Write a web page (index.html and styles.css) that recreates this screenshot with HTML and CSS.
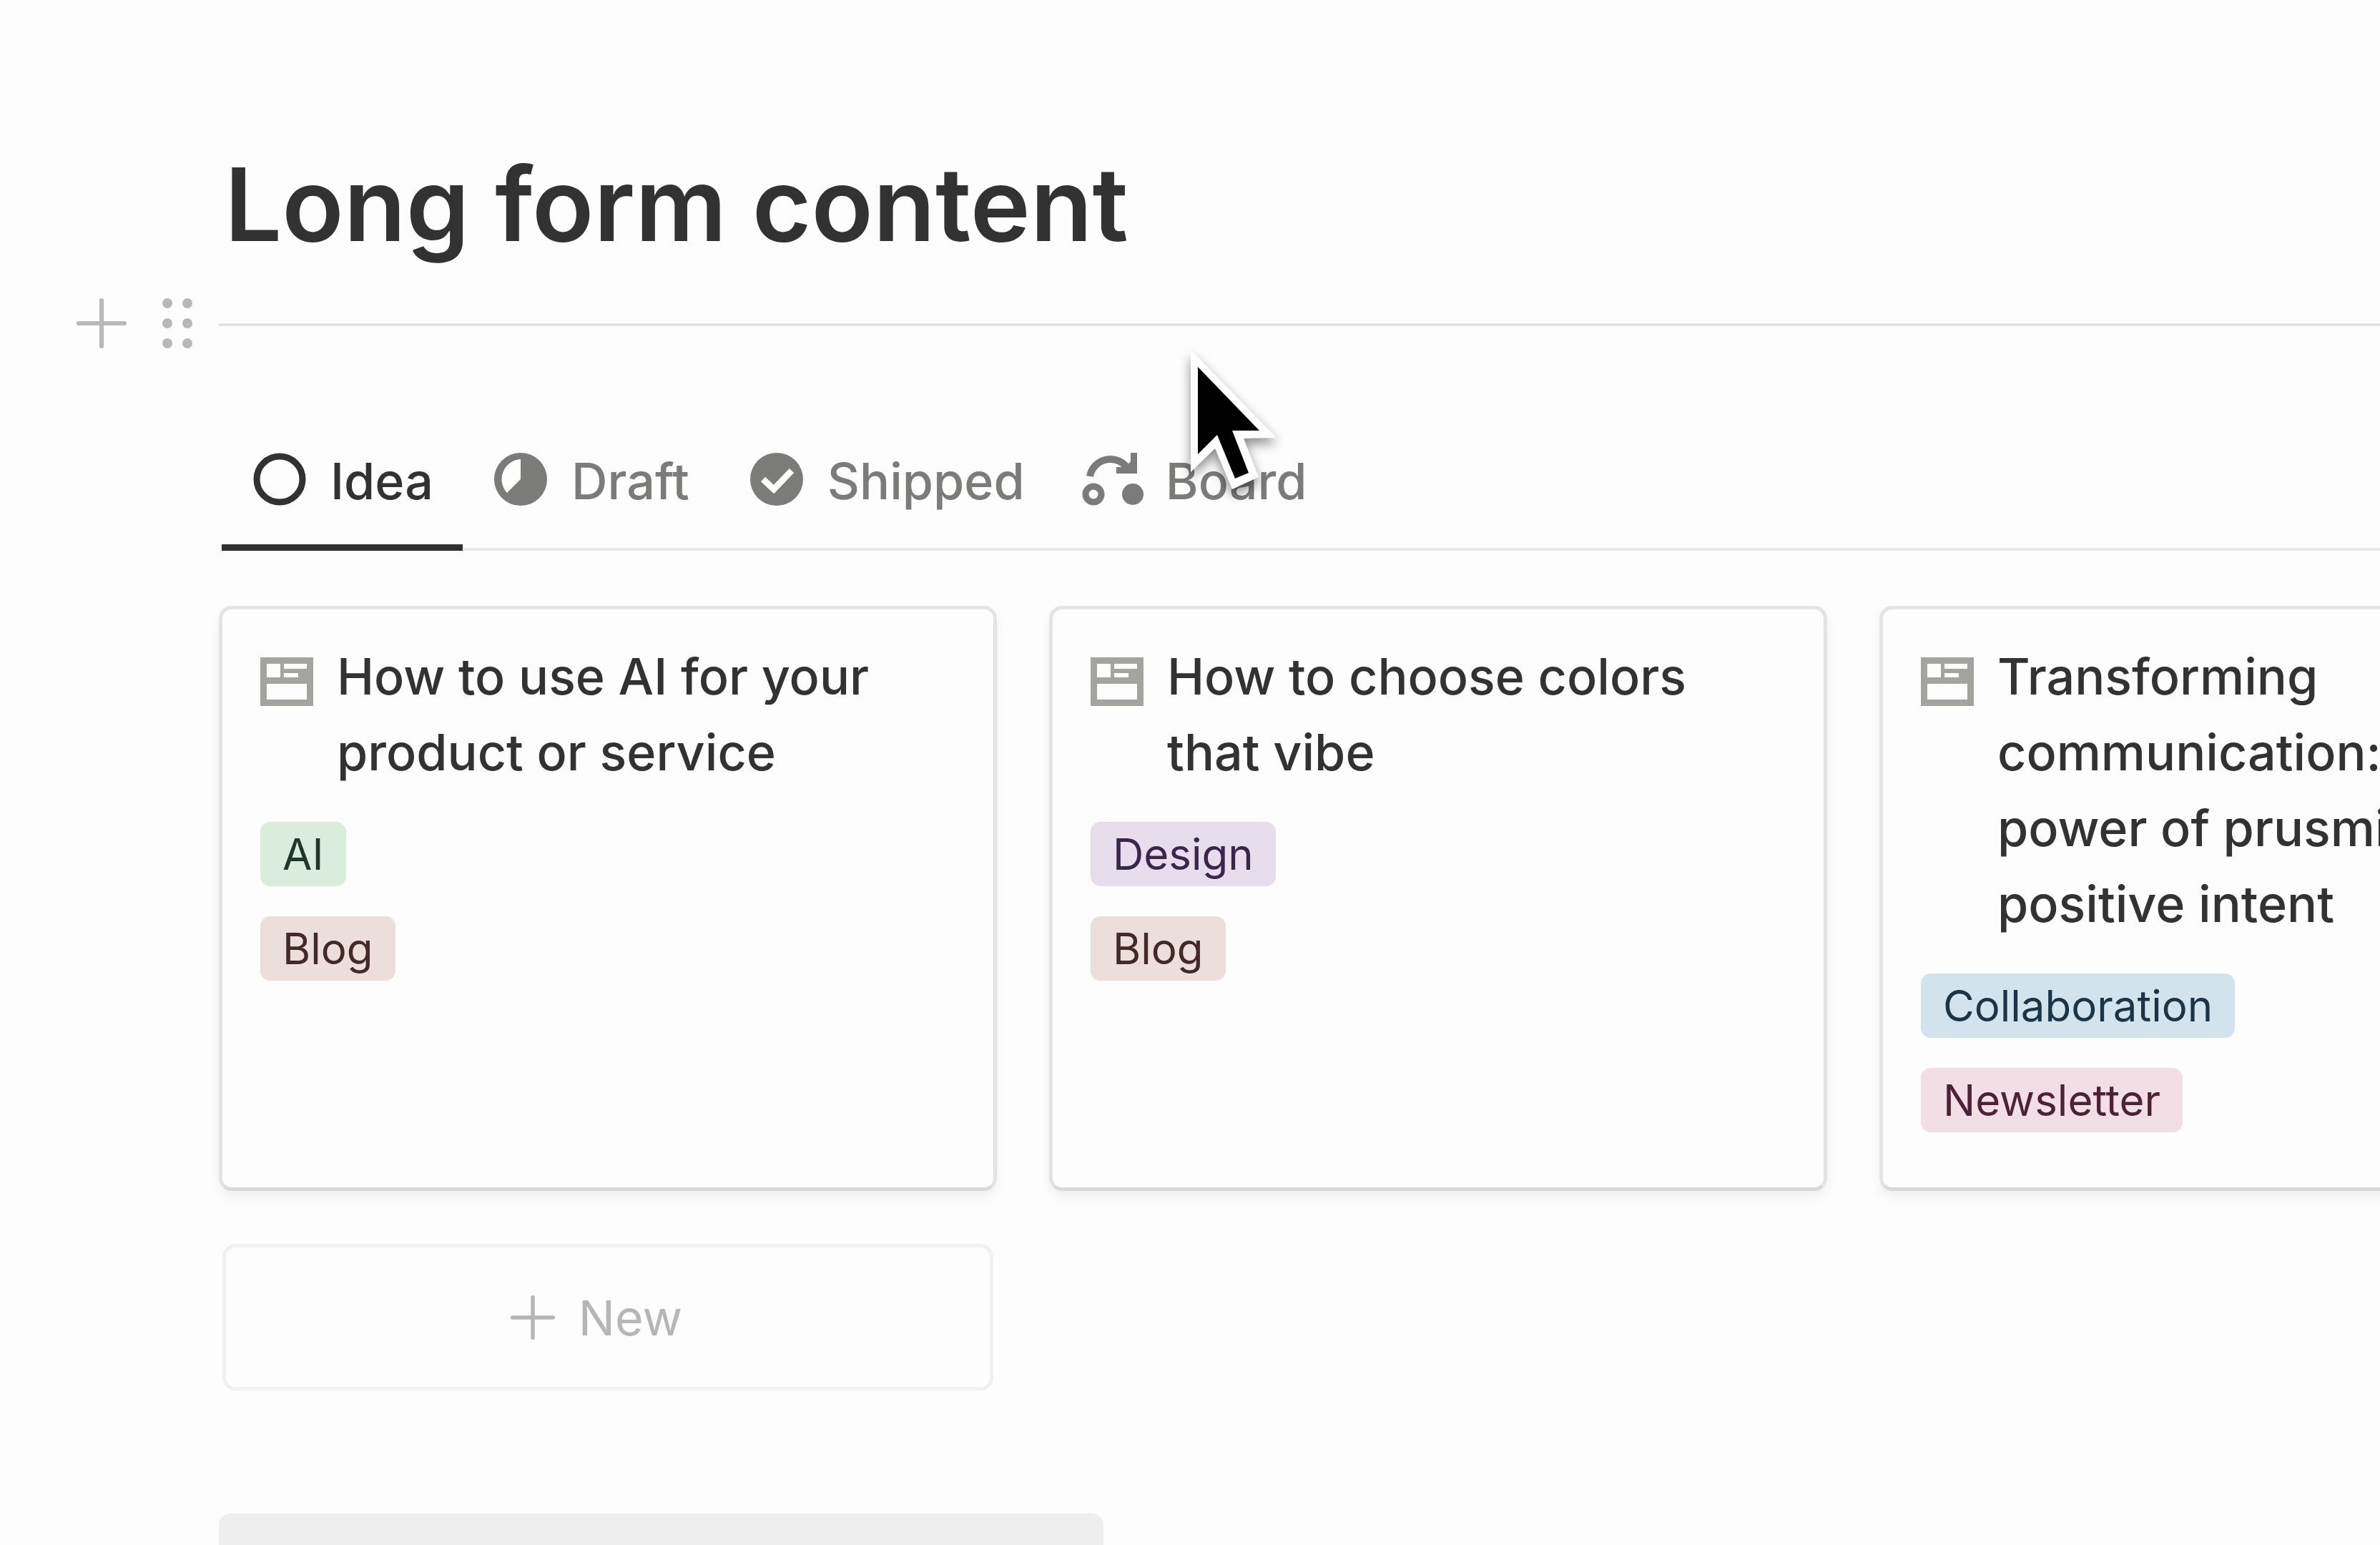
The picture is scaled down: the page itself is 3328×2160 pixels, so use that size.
FILE: index.html
```html
<!DOCTYPE html>
<html lang="en">
<head>
<meta charset="utf-8">
<title>Long form content</title>
<link rel="stylesheet" href="styles.css">
</head>
<body>
<svg class="sprite" aria-hidden="true">
  <symbol id="icon-page" viewBox="0 0 74 68">
    <path fill="#a3a3a0" fill-rule="evenodd" d="M0 0H74V68H0ZM9 9V28H28V9ZM33 9V16H65V9ZM33 22V28H53V22ZM9 37V59H65V37Z"/>
  </symbol>
  <symbol id="icon-plus" viewBox="0 0 68 68">
    <path d="M34 3V65M3 34H65" fill="none" stroke="currentColor" stroke-width="6" stroke-linecap="round"/>
  </symbol>
</svg>
<main class="page">
  <h1 class="title">Long form content</h1>

  <div class="divider-row">
    <button class="handle" type="button" aria-label="Add block"><svg class="handle-plus"><use href="#icon-plus"/></svg></button>
    <button class="handle" type="button" aria-label="Move block">
      <svg class="handle-dots" viewBox="0 0 42 70" fill="currentColor"><circle cx="7" cy="7" r="7"/><circle cx="35" cy="7" r="7"/><circle cx="7" cy="35" r="7"/><circle cx="35" cy="35" r="7"/><circle cx="7" cy="63" r="7"/><circle cx="35" cy="63" r="7"/></svg>
    </button>
    <hr class="divider">
  </div>

  <nav class="tabs" aria-label="Views">
    <button class="tab tab-active" type="button">
      <svg class="tab-icon" viewBox="0 0 74 80"><circle cx="37" cy="37" r="32" fill="none" stroke="currentColor" stroke-width="9"/></svg>
      <span>Idea</span>
    </button>
    <button class="tab" type="button">
      <svg class="tab-icon" viewBox="0 0 74 80"><path fill="currentColor" fill-rule="evenodd" d="M37 0A37 37 0 1 1 37 74A37 37 0 1 1 37 0ZM37 9A28 28 0 0 0 18 56L37 37Z"/></svg>
      <span>Draft</span>
    </button>
    <button class="tab" type="button">
      <svg class="tab-icon" viewBox="0 0 74 80"><circle cx="37" cy="37" r="37" fill="currentColor"/><path d="M18 37L33 51L58 25" fill="none" stroke="#fdfdfb" stroke-width="9"/></svg>
      <span>Shipped</span>
    </button>
    <button class="tab" type="button">
      <svg class="tab-icon tab-icon-wide" viewBox="4 0 78 80"><path d="M10 33A29 29 0 0 1 64 24" fill="none" stroke="currentColor" stroke-width="10"/><path fill="currentColor" d="M67 0H76V29H47V20H60L67 12Z"/><circle cx="15" cy="58" r="11" fill="none" stroke="currentColor" stroke-width="9"/><circle cx="70" cy="58" r="15" fill="currentColor"/></svg>
      <span>Board</span>
    </button>
  </nav>

  <section class="gallery">
    <article class="card">
      <div class="card-head"><svg class="card-icon"><use href="#icon-page"/></svg><h2 class="card-title">How to use AI for your<br>product or service</h2></div>
      <div class="tags"><span class="tag tag-green">AI</span><span class="tag tag-brown">Blog</span></div>
    </article>
    <article class="card">
      <div class="card-head"><svg class="card-icon"><use href="#icon-page"/></svg><h2 class="card-title">How to choose colors<br>that vibe</h2></div>
      <div class="tags"><span class="tag tag-purple">Design</span><span class="tag tag-brown">Blog</span></div>
    </article>
    <article class="card">
      <div class="card-head"><svg class="card-icon"><use href="#icon-page"/></svg><h2 class="card-title">Transforming<br>communication:<br>power of prusmi<br>positive intent</h2></div>
      <div class="tags"><span class="tag tag-blue">Collaboration</span><span class="tag tag-pink">Newsletter</span></div>
    </article>
    <button class="new-card" type="button"><svg class="new-plus"><use href="#icon-plus"/></svg><span>New</span></button>
  </section>

  <div class="block"></div>
</main>

<svg class="cursor" viewBox="0 0 120 196" aria-hidden="true">
  <path fill="#fff" d="M0 0L120 123L74 124L95 178L58 195L34 138L0 171Z"/>
  <path fill="#000" d="M10 24L96 113H58L81 172L62 180L37 119L10 146Z"/>
</svg>
</body>
</html>
```
FILE: styles.css
```css
* {
  box-sizing: border-box;
}

html,
body {
  height: 100%;
}

body {
  margin: 0;
  overflow: hidden;
  position: relative;
  background: #fdfdfd;
  color: #323232;
  font-family: Inter, "Liberation Sans", sans-serif;
}

h1,
h2 {
  margin: 0;
}

button {
  padding: 0;
  border: 0;
  background: none;
  color: inherit;
  font: inherit;
}

.sprite {
  display: none;
}

.page {
  padding: 195px 0 0 106px;
}

.title {
  margin-left: 208px;
  font-size: 142px;
  line-height: 180px;
  font-weight: 600;
}

.divider-row {
  display: flex;
  align-items: center;
  margin-top: 42px;
  color: #b8b8b8;
}

.handle {
  display: flex;
  margin-right: 49px;
}

.handle + .handle {
  margin-right: 37px;
}

.handle-plus {
  width: 72px;
  height: 70px;
}

.handle-dots {
  width: 42px;
  height: 70px;
}

.divider {
  flex: 1;
  height: 4px;
  margin: 4px 0 0;
  border: 0;
  background: #e3e3e3;
}

.tabs {
  display: flex;
  margin: 100px 0 0 204px;
  box-shadow: inset 0 -4px #e8e8e8;
  color: #7b7b7a;
}

.tab {
  display: flex;
  align-items: center;
  gap: 34px;
  padding: 44px 41px 46px 44px;
  border-bottom: 9px solid transparent;
  font-size: 70px;
  line-height: 84px;
  font-weight: 500;
}

.tab-active {
  border-bottom-color: #2f2f2f;
  color: #323232;
}

.tab-icon {
  width: 74px;
  height: 80px;
  overflow: visible;
}

.tab-icon-wide {
  width: 78px;
}

.gallery {
  display: grid;
  grid-template-columns: repeat(3, minmax(1088px, 1fr));
  gap: 74px 73px;
  margin: 77px 0 0 200px;
}

.card {
  padding: 41px 53px 77px;
  border: 5px solid #e4e4e4;
  border-bottom-color: #d9d9d9;
  border-radius: 18px;
  box-shadow: 0 8px 16px rgba(0, 0, 0, 0.06);
}

.card-head {
  display: flex;
  gap: 33px;
}

.card-icon {
  flex: none;
  width: 74px;
  height: 68px;
  margin-top: 26px;
}

.card-title {
  font-size: 70px;
  line-height: 106px;
  font-weight: 500;
  white-space: nowrap;
}

.tags {
  display: flex;
  flex-direction: column;
  align-items: flex-start;
  gap: 42px;
  margin-top: 44px;
}

.tag {
  padding: 0 31px;
  border-radius: 14px;
  font-size: 60px;
  line-height: 90px;
}

.tag-green {
  background: #daeddc;
  color: #1f3829;
}

.tag-brown {
  background: #ecdeda;
  color: #442a26;
}

.tag-purple {
  background: #e7dded;
  color: #3a264b;
}

.tag-blue {
  background: #d2e3ed;
  color: #1b3547;
}

.tag-pink {
  background: #f2dfe6;
  color: #4b2337;
}

.new-card {
  display: flex;
  align-items: center;
  justify-content: center;
  gap: 33px;
  height: 205px;
  margin: 0 5px;
  padding-right: 32px;
  border: 5px solid #f0f0f0;
  border-radius: 18px;
  color: #b6b6b6;
  font-size: 68px;
  line-height: 84px;
}

.new-plus {
  width: 62px;
  height: 62px;
}

.block {
  width: 1237px;
  height: 200px;
  margin: 172px 0 0 200px;
  border-radius: 16px;
  background: #eeeeee;
}

.cursor {
  position: absolute;
  left: 1665px;
  top: 489px;
  width: 120px;
  height: 196px;
  overflow: visible;
  filter: drop-shadow(0 8px 8px rgba(0, 0, 0, 0.45));
}
```
